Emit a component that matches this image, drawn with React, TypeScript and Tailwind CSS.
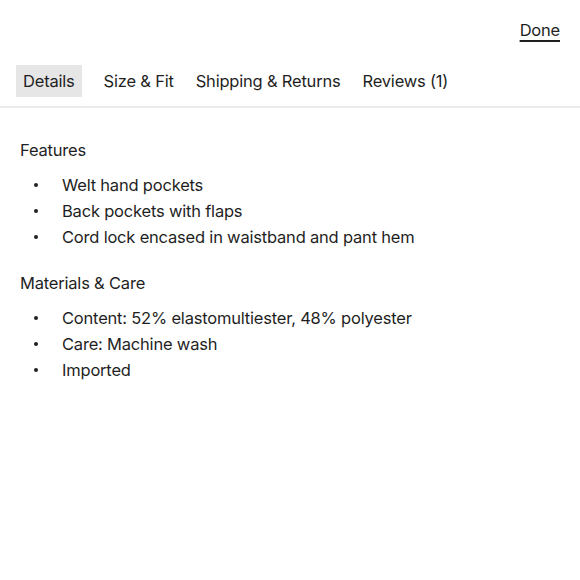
import React from "react";

const tabs = ["Details", "Size & Fit", "Shipping & Returns", "Reviews (1)"];

function Section({ title, items }: { title: string; items: string[] }) {
  return (
    <div>
      <div className="h-[26px] leading-[26px]">{title}</div>
      <ul className="mt-[9px]">
        {items.map((t) => (
          <li key={t} className="flex h-[26px] items-center">
            <span className="w-[42px] pl-[14px] flex items-center">
              <span className="block h-[4px] w-[4px] rounded-full bg-[#222]" />
            </span>
            <span className="leading-[26px]">{t}</span>
          </li>
        ))}
      </ul>
    </div>
  );
}

export default function App() {
  return (
    <div
      className="w-[580px] h-[580px] bg-white text-[#1f1f1f] text-[16.5px] tracking-[-0.2px]"
      style={{ fontFamily: "Inter, 'Noto Sans', sans-serif" }}
    >
      <div className="flex justify-end pr-5 pt-[18px] h-[56px]">
        <span className="underline underline-offset-[4px] decoration-[1.5px] leading-[24px]">Done</span>
      </div>
      <div className="flex items-center gap-[22px] px-4 pt-[9px] pb-[9px] border-b-2 border-[#ebebeb]">
        {tabs.map((t, i) => (
          <div
            key={t}
            className={`h-[32px] flex items-center leading-none ${i === 0 ? "bg-[#e6e6e6] px-[7px]" : ""}`}
          >
            {t}
          </div>
        ))}
      </div>
      <div className="px-5 pt-[29px] flex flex-col gap-[20px]">
        <Section
          title="Features"
          items={["Welt hand pockets", "Back pockets with flaps", "Cord lock encased in waistband and pant hem"]}
        />
        <Section
          title="Materials & Care"
          items={["Content: 52% elastomultiester, 48% polyester", "Care: Machine wash", "Imported"]}
        />
      </div>
    </div>
  );
}
